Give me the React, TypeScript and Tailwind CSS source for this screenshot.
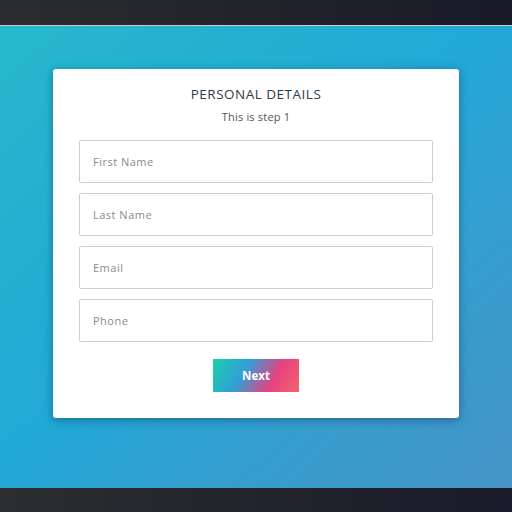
import React from 'react'

const fields = ['First Name', 'Last Name', 'Email', 'Phone']

const App = () => {
  return (
    <div
      className="flex h-[512px] w-[512px] flex-col overflow-hidden"
      style={{ fontFamily: '"Open Sans", "Noto Sans", sans-serif' }}
    >
      {/* top bar */}
      <div className="h-[25px] bg-gradient-to-r from-[#2a2c2d] to-[#191a28]" />
      <div className="h-px bg-[#c9cdd0]" />

      {/* main */}
      <main className="flex flex-1 items-start justify-center bg-gradient-to-br from-[#26b9cb] via-[#22a7d6] to-[#4493c6] pt-[43px]">
        <div className="flex w-[406px] flex-col items-center rounded-[3px] bg-white px-[26px] pt-[16px] pb-[26px] shadow-[0_2px_8px_rgba(0,40,80,0.45)]">
          <h2 className="text-[13.5px] leading-[18px] tracking-[0.5px] text-[#2f3a4a]">
            PERSONAL DETAILS
          </h2>
          <p className="mt-[6px] text-[11px] leading-[16px] tracking-[0.2px] text-[#555]">
            This is step 1
          </p>

          <form className="mt-[15px] flex w-full flex-col gap-[10px]">
            {fields.map((f) => (
              <input
                key={f}
                placeholder={f}
                className="h-[43px] w-full rounded-[2px] border border-[#cfcfcf] px-[13px] text-[11px] tracking-[0.5px] text-[#444] outline-none placeholder:text-[#8a8a8a]"
              />
            ))}
          </form>

          <button
            type="button"
            className="mt-[17px] h-[33px] w-[86px] text-[11.5px] font-bold text-white"
            style={{ backgroundImage: 'linear-gradient(120deg, #1ecfa9 0%, #2fa0d8 35%, #e8427f 70%, #f2656a 100%)' }}
          >
            Next
          </button>
        </div>
      </main>

      {/* bottom bar */}
      <div className="h-[24px] bg-gradient-to-r from-[#2b2d2e] to-[#1a1a2a]" />
    </div>
  )
}

export default App
